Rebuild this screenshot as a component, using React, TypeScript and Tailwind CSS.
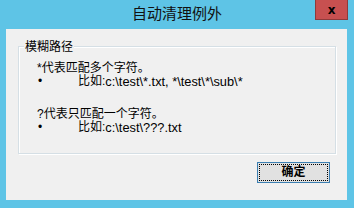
import React from "react";

const cjk = "font-['Liberation_Sans','Noto_Sans_CJK_SC',sans-serif]";

function Bullet({ label, path }: { label: string; path: string }) {
  return (
    <div className="flex h-[13px] items-center">
      <span className="flex w-[41px] justify-start pl-[1px] text-[12px] leading-[13px]">•</span>
      <span className="text-[12px] leading-[13px]">{label}</span>
      <span className="whitespace-pre text-[12.8px] leading-[13px]">{path}</span>
    </div>
  );
}

export default function App() {
  return (
    <div className={`flex h-[208px] w-[354px] flex-col bg-[#5EC4E6] ${cjk} text-black`}>
      <div className="relative flex h-[29px] items-center justify-center">
        <span className="pb-[1px] text-[15px] leading-[18px] text-[#111]">自动清理例外</span>
        <div className="absolute right-[6px] top-0 flex h-[20px] w-[33px] items-center justify-center border border-t-0 border-[#8E3B3B] bg-[#C75050]">
          <span className="font-['DejaVu_Sans',sans-serif] text-[12px] font-bold leading-[12px] text-black">x</span>
        </div>
      </div>
      <div className="ml-[6px] flex h-[171px] w-[341px] flex-col bg-[#F0F0F0] pl-[12px] pt-[17px]">
        <div className="flex h-[108px] w-[318px] flex-col border border-[#D5DFE5] shadow-[inset_1px_1px_0_#ffffff,1px_1px_0_#ffffff]">
          <span className="-mt-[6px] ml-[5px] self-start bg-[#F0F0F0] px-[1px] text-[12px] leading-[13px]">模糊路径</span>
          <div className="mt-[8px] flex flex-col pl-[18px]">
            <span className="text-[12px] leading-[13px]">*代表匹配多个字符。</span>
            <Bullet label="比如:" path={"c:\\test\\*.txt, *\\test\\*\\sub\\*"} />
            <span className="mt-[20px] text-[12px] leading-[13px]">?代表只匹配一个字符。</span>
            <Bullet label="比如:" path={"c:\\test\\???.txt"} />
          </div>
        </div>
        <div className="mt-[8px] flex justify-end pr-[17px]">
          <div className="flex h-[21px] w-[73px] items-center justify-center border border-[#3C7FB1] bg-[#E1E1E1] p-[1px]">
            <div className="flex h-full w-full items-center justify-center border border-dotted border-black">
              <span className="text-[12px] font-bold leading-[13px]">确定</span>
            </div>
          </div>
        </div>
      </div>
    </div>
  );
}
